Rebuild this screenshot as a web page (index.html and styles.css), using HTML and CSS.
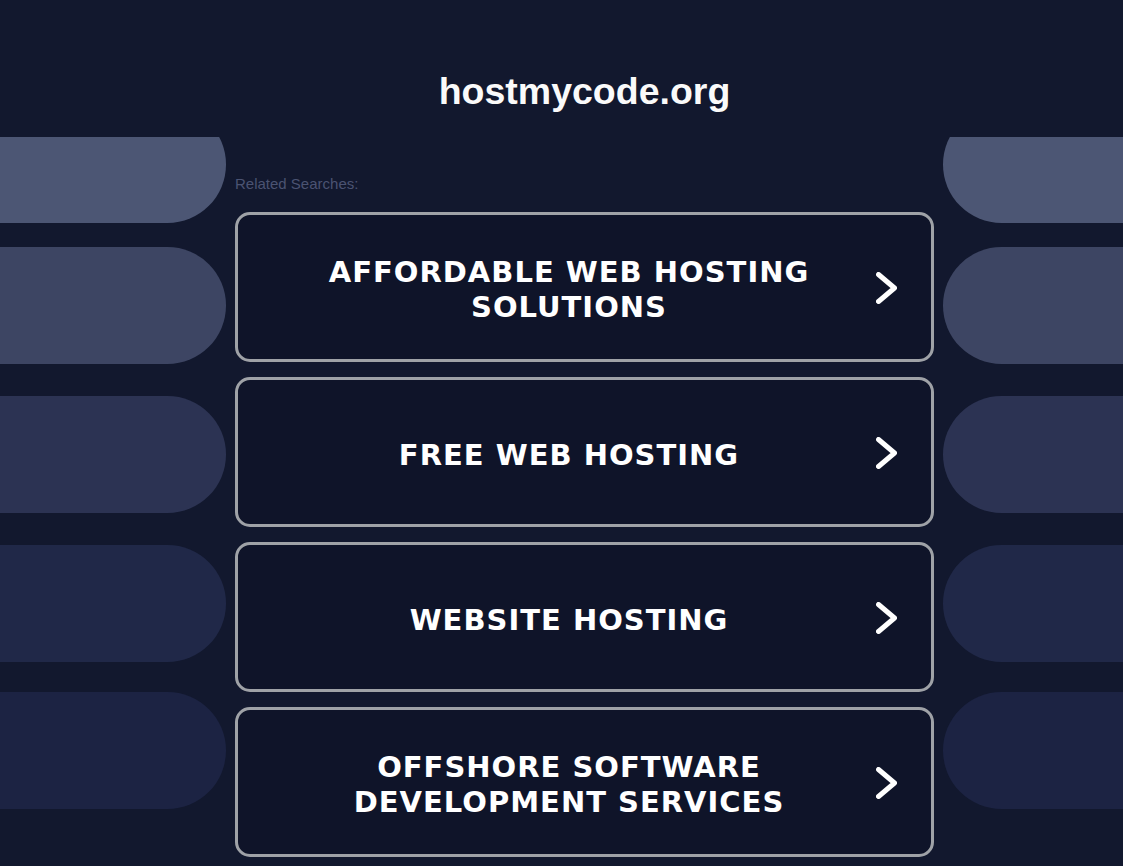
FILE: index.html
```html
<!DOCTYPE html>
<html lang="en">
<head>
<meta charset="utf-8">
<title>hostmycode.org</title>
<link rel="stylesheet" href="styles.css">
</head>
<body>
<div class="page">
  <header class="header">
    <h1 class="title">hostmycode.org</h1>
  </header>
  <main class="main">
    <div class="pills pills-left">
      <div class="pill p1"></div>
      <div class="pill p2"></div>
      <div class="pill p3"></div>
      <div class="pill p4"></div>
      <div class="pill p5"></div>
    </div>
    <section class="content">
      <p class="related">Related Searches:</p>
      <ul class="links">
        <li><a class="card" href="#"><span class="card-text">Affordable Web Hosting Solutions</span><svg class="chev" viewBox="0 0 21 32" width="21" height="32"><polyline points="2.5,2.5 18.5,16 2.5,29.5" /></svg></a></li>
        <li><a class="card" href="#"><span class="card-text">Free Web Hosting</span><svg class="chev" viewBox="0 0 21 32" width="21" height="32"><polyline points="2.5,2.5 18.5,16 2.5,29.5" /></svg></a></li>
        <li><a class="card" href="#"><span class="card-text">Website Hosting</span><svg class="chev" viewBox="0 0 21 32" width="21" height="32"><polyline points="2.5,2.5 18.5,16 2.5,29.5" /></svg></a></li>
        <li><a class="card" href="#"><span class="card-text">Offshore Software Development Services</span><svg class="chev" viewBox="0 0 21 32" width="21" height="32"><polyline points="2.5,2.5 18.5,16 2.5,29.5" /></svg></a></li>
      </ul>
    </section>
    <div class="pills pills-right">
      <div class="pill p1"></div>
      <div class="pill p2"></div>
      <div class="pill p3"></div>
      <div class="pill p4"></div>
      <div class="pill p5"></div>
    </div>
  </main>
</div>
</body>
</html>
```

FILE: styles.css
```css
html, body {
  margin: 0;
  padding: 0;
  background: #12182e;
  height: 100%;
  overflow: hidden;
}

.page {
  font-family: "Liberation Sans", Arial, sans-serif;
  color: #fff;
}

.header {
  display: grid;
  grid-template-columns: 226px 699px 180px;
  column-gap: 9px;
  height: 137px;
  box-sizing: border-box;
  padding-top: 70px;
}

.title {
  grid-column: 2;
  margin: 0;
  text-align: center;
  font-family: "Liberation Sans", Arial, sans-serif;
  font-weight: bold;
  font-size: 37.5px;
  line-height: 43px;
  color: #fafafa;
}

.main {
  display: grid;
  grid-template-columns: 226px 699px 180px;
  column-gap: 9px;
  align-items: start;
}

.pills {
  display: flex;
  flex-direction: column;
  overflow: hidden;
  height: 729px;
}

.pill {
  flex: none;
  height: 117px;
}

.pills-left .pill { border-radius: 0 58.5px 58.5px 0; }
.pills-right .pill { border-radius: 58.5px 0 0 58.5px; }

.pill.p1 { margin-top: -31px; background: #4c5674; }
.pill.p2 { margin-top: 24px; background: #3d4563; }
.pill.p3 { margin-top: 32px; background: #2c3353; }
.pill.p4 { margin-top: 32px; background: #202848; }
.pill.p5 { margin-top: 30px; background: #1c2343; }

.content {
  display: flex;
  flex-direction: column;
}

.related {
  margin: 38px 0 19px;
  font-family: "Liberation Sans", Arial, sans-serif;
  font-size: 15px;
  line-height: 18px;
  color: #4b5372;
  font-weight: normal;
}

.links {
  list-style: none;
  margin: 0;
  padding: 0;
  display: flex;
  flex-direction: column;
  gap: 15px;
}

.card {
  box-sizing: border-box;
  height: 150px;
  display: flex;
  align-items: center;
  border: 3px solid #9fa2a7;
  border-radius: 15px;
  background: #0f1429;
  padding: 0 34px 0 40px;
  text-decoration: none;
  color: #fff;
}

.card-text {
  flex: 1;
  padding-top: 6px;
  text-align: center;
  text-transform: uppercase;
  font-family: "DejaVu Sans", Verdana, sans-serif;
  font-weight: bold;
  font-size: 29px;
  line-height: 35px;
  letter-spacing: 1px;
  color: #fff;
}

.chev {
  flex: none;
  margin-left: 16px;
  margin-top: 2px;
  fill: none;
  stroke: #fff;
  stroke-width: 5;
  stroke-linecap: round;
  stroke-linejoin: round;
}
```
